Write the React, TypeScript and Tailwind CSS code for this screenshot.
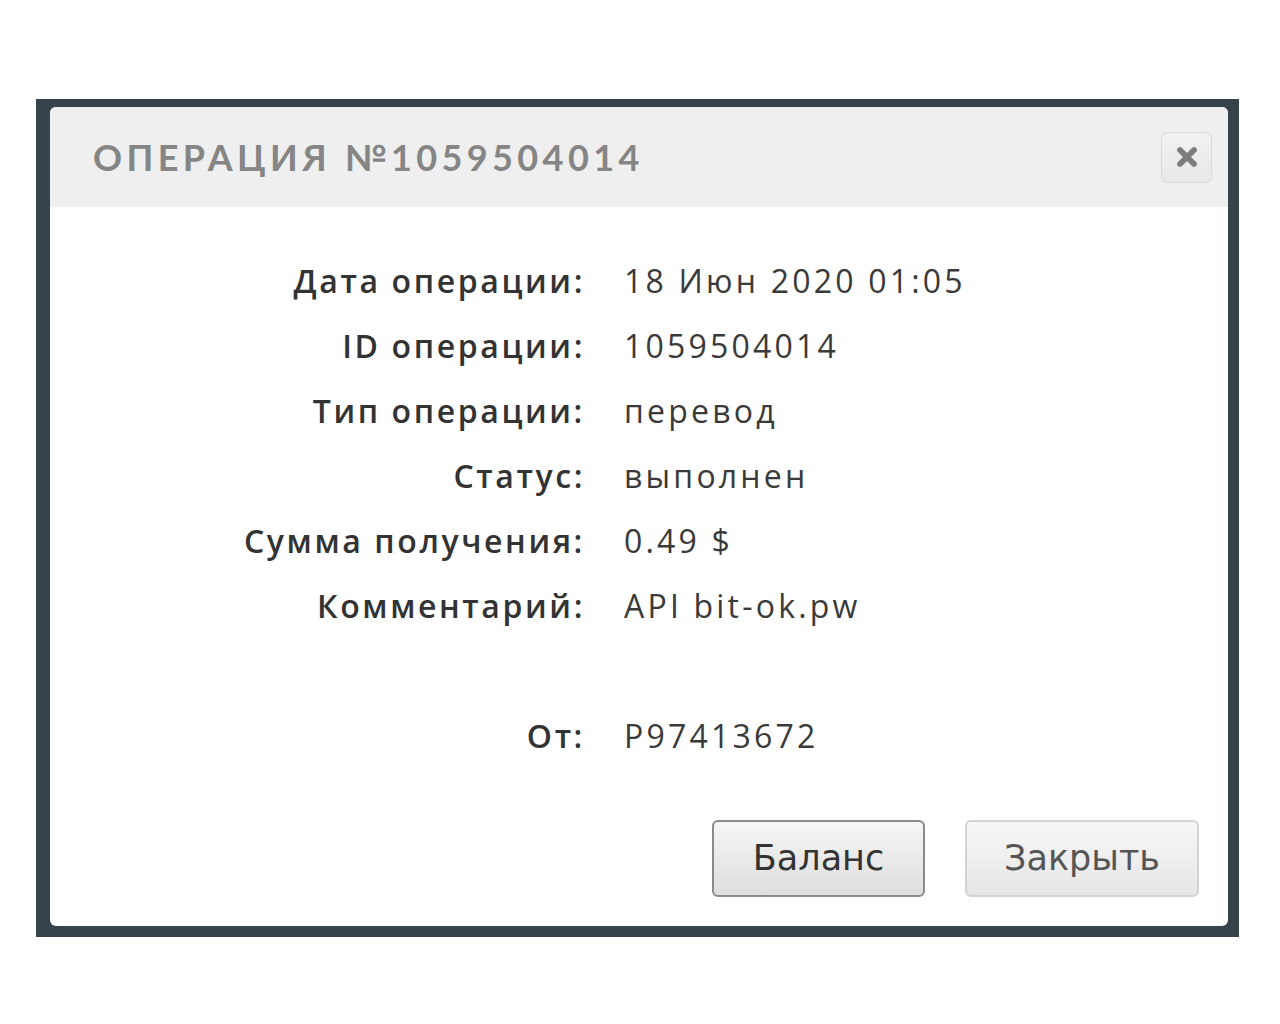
import { X } from "lucide-react";

const rows: { label: string; value: string }[] = [
  { label: "Дата операции:", value: "18 Июн 2020 01:05" },
  { label: "ID операции:", value: "1059504014" },
  { label: "Тип операции:", value: "перевод" },
  { label: "Статус:", value: "выполнен" },
  { label: "Сумма получения:", value: "0.49 $" },
  { label: "Комментарий:", value: "API bit-ok.pw" },
  { label: "", value: "" },
  { label: "От:", value: "P97413672" },
];

export default function App() {
  return (
    <div className="min-h-[1024px] bg-white pt-[99px] pl-[36px]">
      <div className="w-[1203px] bg-[#36434a] pt-[8px] pl-[14px] pr-[11px] pb-[11px]">
        <div className="bg-white rounded-md overflow-hidden">
          {/* Header */}
          <div className="h-[100px] bg-[#efefef] flex items-center justify-between pl-[43px] pr-[16px]">
            <h2 className="font-['Lato',sans-serif] font-bold text-[36px] tracking-[4.4px] text-[#858585] leading-none">
              ОПЕРАЦИЯ №1059504014
            </h2>
            <button className="w-[51px] h-[51px] rounded-md border border-[#d9d9d9] bg-gradient-to-b from-[#f2f2f2] to-[#e8e8e8] flex items-center justify-center">
              <X size={28} strokeWidth={5} color="#7d7d7d" />
            </button>
          </div>

          {/* Details */}
          <div className="pt-[41px] grid grid-cols-[535px_1fr] gap-x-[39px] font-['Open_Sans',sans-serif] text-[32px]">
            {rows.map((r, i) => (
              <div key={i} className="contents">
                <div className="h-[65px] flex items-center justify-end font-semibold text-[#333] tracking-[2.6px]">{r.label}</div>
                <div className="h-[65px] flex items-center text-[#3a3a3a] tracking-[3.2px]">{r.value}</div>
              </div>
            ))}
          </div>

          {/* Buttons */}
          <div className="flex justify-end gap-[40px] pt-[52px] pb-[29px] pr-[29px] font-['DejaVu_Sans',sans-serif] text-[35px]">
            <button className="w-[213px] h-[77px] rounded-md border-2 border-[#8a8a8a] bg-gradient-to-b from-[#f6f6f6] to-[#dedede] text-[#333]">
              Баланс
            </button>
            <button className="w-[234px] h-[77px] rounded-md border-2 border-[#d4d4d4] bg-gradient-to-b from-[#f7f7f7] to-[#e6e6e6] text-[#555]">
              Закрыть
            </button>
          </div>
        </div>
      </div>
    </div>
  );
}
